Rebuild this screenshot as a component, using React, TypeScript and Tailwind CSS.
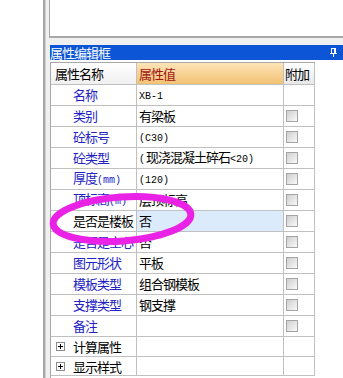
import React from "react";

type Row = { name: string; value?: string; cb?: boolean; sel?: boolean; plus?: boolean; h: number };

const rows: Row[] = [
  { name: "名称", value: "XB-1", h: 21 },
  { name: "类别", value: "有梁板", cb: true, h: 21 },
  { name: "砼标号", value: "(C30)", cb: true, h: 21 },
  { name: "砼类型", value: "(现浇混凝土碎石<20)", cb: true, h: 21 },
  { name: "厚度(mm)", value: "(120)", cb: true, h: 21 },
  { name: "顶标高(m)", value: "层顶标高", cb: true, h: 21 },
  { name: "是否是楼板", value: "否", cb: true, sel: true, h: 21 },
  { name: "是否是空心", value: "否", cb: true, h: 21 },
  { name: "图元形状", value: "平板", cb: true, h: 21 },
  { name: "模板类型", value: "组合钢模板", cb: true, h: 21 },
  { name: "支撑类型", value: "钢支撑", cb: true, h: 21 },
  { name: "备注", value: "", cb: true, h: 21 },
  { name: "计算属性", plus: true, h: 20 },
  { name: "显示样式", plus: true, h: 19 },
];

function T({ s }: { s: string }) {
  const parts = s.split(/([\x20-\x7e]+)/).filter((p) => p.length > 0);
  return (
    <span className="leading-[14px]">
      {parts.map((p, i) =>
        /^[\x20-\x7e]+$/.test(p) ? (
          <span key={i} className="font-['Liberation_Mono',monospace] text-[10px] tracking-normal mr-[1px]">
            {p}
          </span>
        ) : (
          <span key={i}>{p}</span>
        )
      )}
    </span>
  );
}

function Checkbox() {
  return (
    <div className="w-[12px] h-[12px] border border-[#a4a4a4] bg-gradient-to-br from-[#cfcfcf] to-[#f9f9f9]" />
  );
}

function Plus() {
  return (
    <div className="w-[9px] h-[9px] border border-[#8c8c8c] bg-white flex items-center justify-center relative">
      <div className="absolute w-[5px] h-[1px] bg-black" />
      <div className="absolute w-[1px] h-[5px] bg-black" />
    </div>
  );
}

export default function App() {
  return (
    <div className="relative w-[343px] h-[378px] overflow-hidden bg-white flex font-['Noto_Sans_CJK_SC',sans-serif] text-[13px] tracking-[-1px] leading-none text-black">
      <div className="w-[43px] shrink-0 bg-white" />
      <div className="w-[3px] shrink-0 bg-[#a6a6a6] border-r border-[#d0d0d0]" />
      <div className="flex-1 flex flex-col bg-[#f0f0f0] pl-[3px]">
        <div className="h-[38px] shrink-0 bg-white border-l border-b-2 border-[#a8a8a8]" />
        <div className="h-[7px] shrink-0" />
        <div className="h-[15px] shrink-0 ml-[1px] bg-[#0b55d6] flex items-center justify-between text-white pr-[6px]">
          <span>属性编辑框</span>
          <svg width="7" height="9" viewBox="0 0 7 9">
            <rect x="1" y="0" width="5" height="1" fill="white" />
            <rect x="1" y="0" width="1" height="5" fill="white" />
            <rect x="4" y="0" width="2" height="5" fill="white" />
            <rect x="0" y="5" width="7" height="1" fill="white" />
            <rect x="3" y="6" width="1" height="3" fill="white" />
          </svg>
        </div>
        <div className="h-[2px] shrink-0 bg-white ml-[1px]" />
        <div className="flex flex-1 bg-white ml-[1px]">
          <div className="border-l border-t border-[#a8a8a8] grid grid-cols-[86px_147px_31px] content-start h-full">
            <div className="h-[22px] border-r border-b border-[#c0c0c0] bg-gradient-to-b from-[#ffffff] to-[#f0f0f0] flex items-center pl-[4px]">
              属性名称
            </div>
            <div className="h-[22px] border-r border-b border-[#c0c0c0] bg-gradient-to-b from-[#fde4b8] to-[#f2c272] flex items-center pl-[2px] text-[#a01414]">
              属性值
            </div>
            <div className="h-[22px] border-r border-b border-[#c0c0c0] bg-gradient-to-b from-[#ffffff] to-[#e8e8e8] flex items-center pl-[1px]">
              附加
            </div>
            {rows.map((r, i) => (
              <React.Fragment key={i}>
                <div
                  style={{ height: r.h }}
                  className={
                    "border-r border-b border-[#c0c0c0] flex items-center whitespace-nowrap " +
                    (r.plus ? "pl-[5px] text-black" : r.sel ? "pl-[22px] text-black" : "pl-[22px] text-[#2222c4]")
                  }
                >
                  {r.plus ? (
                    <>
                      <Plus />
                      <span className="ml-[8px]">{r.name}</span>
                    </>
                  ) : (
                    <T s={r.name} />
                  )}
                </div>
                <div
                  style={{ height: r.h }}
                  className={
                    "border-r border-b border-[#c0c0c0] flex items-center pl-[2px] whitespace-nowrap overflow-hidden " +
                    (r.sel ? "bg-[#dcebfc]" : "")
                  }
                >
                  {r.value ? <T s={r.value} /> : null}
                </div>
                <div
                  style={{ height: r.h }}
                  className="border-r border-b border-[#c0c0c0] flex items-center pl-[2px]"
                >
                  {r.cb ? <Checkbox /> : null}
                </div>
              </React.Fragment>
            ))}
          </div>
          <div className="flex-1 bg-white" />
        </div>
      </div>
      <svg className="absolute left-0 top-0 pointer-events-none" width="343" height="378">
        <ellipse cx="122" cy="219" rx="69" ry="22" fill="none" stroke="#ea22e6" strokeWidth="7" transform="rotate(-4 122 219)" />
      </svg>
    </div>
  );
}
